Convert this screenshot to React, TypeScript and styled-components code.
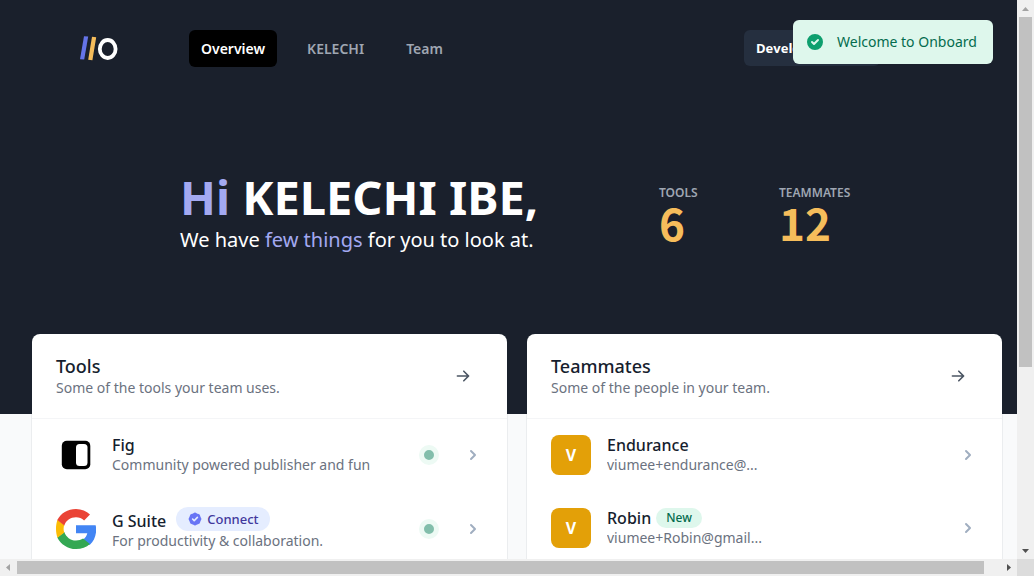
import React from 'react';
import styled, { createGlobalStyle } from 'styled-components';

const GlobalStyle = createGlobalStyle`
  *, *::before, *::after { box-sizing: border-box; }
  body {
    margin: 0;
    background: #f9fafb;
    color: #161e2e;
    font-family: "Noto Sans", "Open Sans", sans-serif;
    font-size: 14px;
    line-height: 20px;
  }
  h1, h2, h3, p, ul, dl, dd { margin: 0; padding: 0; }
  button { font: inherit; border: 0; cursor: pointer; }
  a { color: inherit; text-decoration: none; }
  svg { display: block; flex: none; }
`;

const Window = styled.div`
  display: grid;
  grid-template: minmax(0, 1fr) 17px / minmax(0, 1fr) 17px;
  height: 100vh;
`;

const Viewport = styled.div`
  position: relative;
  overflow: hidden;
`;

const Hero = styled.header`
  min-height: 414px;
  background: #1a202c;
  color: #fff;
`;

const Nav = styled.nav`
  display: flex;
  align-items: flex-start;
  padding: 30px 137px 0 80px;
`;

const LogoLink = styled.a`
  margin-right: 71px;
  padding-top: 6px;
`;

const NavLinks = styled.div`
  display: flex;
  flex: 1;
  gap: 18px;
`;

const NavLink = styled.a<{ $active?: boolean }>`
  padding: 8px 12px;
  border-radius: 6px;
  line-height: 21px;
  font-weight: 600;
  color: ${p => (p.$active ? '#fff' : '#9fa6b2')};
  background: ${p => (p.$active ? '#000' : 'transparent')};
`;

const ModeButton = styled.button`
  width: 136px;
  padding: 8px 12px;
  border-radius: 6px;
  background: #252f3f;
  color: #fff;
  font-family: "Open Sans", "Noto Sans", sans-serif;
  font-weight: 700;
  font-size: 13px;
  line-height: 20px;
  text-align: left;
`;

const Intro = styled.div`
  display: flex;
  padding: 105px 100px 0 180px;
`;

const Greeting = styled.div`
  flex: 0 0 479px;
  white-space: nowrap;
`;

const Title = styled.h1`
  font-size: 47px;
  line-height: 50px;
  font-weight: 700;
`;

const Lead = styled.p`
  margin-top: 6px;
  font-size: 20px;
  line-height: 24px;
`;

const Accent = styled.span`
  color: #a3a9f1;
`;

const Stats = styled.dl`
  display: flex;
`;

const Stat = styled.div`
  min-width: 120px;
  padding-top: 11px;
`;

const StatLabel = styled.dt`
  font-size: 12px;
  font-weight: 600;
  line-height: 20px;
  color: #9fa6b2;
`;

const StatValue = styled.dd`
  font-family: "Noto Sans CJK JP", "Noto Sans", sans-serif;
  font-size: 44px;
  font-weight: 700;
  line-height: 38px;
  color: #f6bd5b;
`;

const Cards = styled.main`
  display: grid;
  grid-template-columns: 1fr 1fr;
  gap: 20px;
  margin-top: -80px;
  padding: 0 15px 32px 32px;
`;

const Card = styled.section`
  border-radius: 8px;
  background: #fff;
  box-shadow: 0 0 0 1px rgba(22, 30, 46, 0.06);
`;

const CardHeader = styled.div`
  display: flex;
  align-items: center;
  justify-content: space-between;
  height: 85px;
  padding: 0 36px 0 24px;
  border-bottom: 1px solid #f4f5f7;
  color: #4b5563;
`;

const CardTitle = styled.h2`
  font-size: 18px;
  font-weight: 500;
  line-height: 24px;
  color: #161e2e;
`;

const Muted = styled.p`
  font-size: 14px;
  line-height: 20px;
  color: #6b7280;
  overflow: hidden;
  text-overflow: ellipsis;
  white-space: nowrap;
`;

const List = styled.ul`
  display: flex;
  flex-direction: column;
  gap: 1px;
  list-style: none;
`;

const Row = styled.a`
  display: flex;
  align-items: center;
  min-height: 72px;
  padding: 15px 24px;
  color: #a0aec0;
`;

const RowText = styled.div`
  flex: 1;
  min-width: 0;
  margin-left: 16px;
`;

const RowTitle = styled.div`
  display: flex;
  align-items: flex-end;
`;

const Name = styled.h3`
  font-size: 16px;
  font-weight: 500;
  line-height: 20px;
  color: #161e2e;
`;

const Mail = styled(Muted)`
  max-width: 168px;
`;

const ConnectPill = styled.span`
  display: flex;
  align-items: center;
  gap: 4px;
  height: 24px;
  margin-left: 10px;
  padding: 0 11px;
  border-radius: 12px;
  background: #e5edff;
  color: #42389d;
  font-size: 13px;
  font-weight: 500;
`;

const NewPill = styled.span`
  margin-left: 5px;
  padding: 0 10px;
  border-radius: 10px;
  background: #def7ec;
  color: #046c4e;
  font-size: 12px;
  font-weight: 500;
`;

const StatusDot = styled.span`
  width: 20px;
  height: 20px;
  margin-right: 24px;
  border: 5px solid #edfaf4;
  border-radius: 50%;
  background: #82beab;
`;

const ChevronBox = styled.span`
  width: 20px;
`;

const Avatar = styled.span`
  display: flex;
  align-items: center;
  justify-content: center;
  width: 40px;
  height: 40px;
  border-radius: 8px;
  background: #e3a008;
  color: #fff;
  font-size: 16px;
  font-weight: 700;
`;

const Toast = styled.div`
  position: absolute;
  top: 20px;
  right: 24px;
  display: flex;
  align-items: center;
  gap: 12px;
  min-width: 200px;
  height: 44px;
  padding: 0 12px;
  border-radius: 6px;
  background: #def7ec;
  color: #046c4e;
  white-space: nowrap;
`;

const Track = styled.div<{ $vertical?: boolean }>`
  display: flex;
  flex-direction: ${p => (p.$vertical ? 'column' : 'row')};
  align-items: center;
  background: #f0f0f0;
`;

const Thumb = styled.div<{ $vertical?: boolean }>`
  flex: 0 0 ${p => (p.$vertical ? '350px' : 'calc(100% - 50px)')};
  ${p => (p.$vertical ? 'width' : 'height')}: 13px;
  background: #c1c1c1;
`;

const Spacer = styled.div`
  flex: 1;
`;

const Corner = styled.div`
  background: #dcdcdc;
`;

const Logo = () => (
  <svg width="38" height="25" viewBox="0 0 38 25" role="img" aria-label="Onboard">
    <path d="M4 .2L8.200.6 4.200 23.600 0 23.200z" fill="#6574e8" />
    <path d="M12 .8L16.200 1.200 12.400 24.200 8.200 23.800z" fill="#f6bd5b" />
    <ellipse cx="27.700" cy="13" rx="7.900" ry="9" fill="none" stroke="#fff" strokeWidth="3.800" />
  </svg>
);

const Solid = ({ d, size = 20, color = 'currentColor' }: { d: string; size?: number; color?: string }) => (
  <svg width={size} height={size} viewBox="0 0 20 20" fill={color} aria-hidden="true">
    <path fillRule="evenodd" clipRule="evenodd" d={d} />
  </svg>
);

const ICON = {
  check: 'M10 18a8 8 0 100-16 8 8 0 000 16zm3.707-9.293a1 1 0 00-1.414-1.414L9 10.586 7.707 9.293a1 1 0 00-1.414 1.414l2 2a1 1 0 001.414 0l4-4z',
  badge: 'M6.267 3.455a3.066 3.066 0 001.745-.723 3.066 3.066 0 013.976 0 3.066 3.066 0 001.745.723 3.066 3.066 0 012.812 2.812c.051.643.304 1.254.723 1.745a3.066 3.066 0 010 3.976 3.066 3.066 0 00-.723 1.745 3.066 3.066 0 01-2.812 2.812 3.066 3.066 0 00-1.745.723 3.066 3.066 0 01-3.976 0 3.066 3.066 0 00-1.745-.723 3.066 3.066 0 01-2.812-2.812 3.066 3.066 0 00-.723-1.745 3.066 3.066 0 010-3.976 3.066 3.066 0 00.723-1.745 3.066 3.066 0 012.812-2.812zm7.440 5.252a1 1 0 00-1.414-1.414L9 10.586 7.707 9.293a1 1 0 00-1.414 1.414l2 2a1 1 0 001.414 0l4-4z',
  chevron: 'M7.293 14.707a1 1 0 010-1.414L10.586 10 7.293 6.707a1 1 0 011.414-1.414l4 4a1 1 0 010 1.414l-4 4a1 1 0 01-1.414 0z',
  arrow: 'M10.293 3.293a1 1 0 011.414 0l6 6a1 1 0 010 1.414l-6 6a1 1 0 01-1.414-1.414L14.586 11H3a1 1 0 110-2h11.586l-4.293-4.293a1 1 0 010-1.414z',
};

const FigLogo = () => (
  <svg width="40" height="40" viewBox="0 0 40 40" aria-hidden="true">
    <rect x="5.800" y="5.800" width="28.500" height="28.500" rx="5" fill="#000" />
    <rect x="20" y="9" width="11.500" height="22" rx="3.500" fill="#fff" />
  </svg>
);

const GoogleLogo = () => (
  <svg width="40" height="40" viewBox="4 4 40 40" aria-hidden="true">
    <path fill="#4285f4" d="M43.600 20.300H24v7.900h11.300c-.5 2.600-2 4.800-4.200 6.300v5.200h6.800c4-3.700 6.300-9.100 6.300-15.500 0-1.400-.2-2.700-.6-3.900z" />
    <path fill="#34a853" d="M24 44c5.700 0 10.400-1.900 13.900-5.100l-6.800-5.300c-1.900 1.300-4.300 2-7.100 2-5.500 0-10.100-3.700-11.700-8.600l-7 5.400C8.700 39.200 15.800 44 24 44z" />
    <path fill="#fbbc05" d="M12.300 27.600c-.5-1.200-.7-2.400-.7-3.700s.2-2.600.7-3.800L5.400 14.800C4.500 17.600 4 20.700 4 24s.5 6 1.500 8.800z" />
    <path fill="#ea4335" d="M24 12.300c3.100 0 5.900 1.100 8.100 3.100l5.900-5.900C34.400 6.100 29.700 4 24 4 15.800 4 8.700 8.300 5.300 15.100l7 5.300c1.600-4.700 6.200-8.100 11.700-8.100z" />
  </svg>
);

const SmallArrow = ({ direction }: { direction: 'up' | 'down' | 'left' | 'right' }) => {
  const d = {
    up: 'M5 11l3.500-4 3.500 4z',
    down: 'M5 7h7l-3.500 4z',
    left: 'M10 5v7L6 8.500z',
    right: 'M7 5v7l4-3.500z',
  }[direction];
  const muted = direction === 'up' || direction === 'left';
  return (
    <svg width="17" height="17" viewBox="0 0 17 17" aria-hidden="true">
      <path d={d} fill={muted ? '#a3a3a3' : '#505050'} />
    </svg>
  );
};

const tools = [
  { name: 'Fig', text: 'Community powered publisher and fun', logo: <FigLogo />, connect: false },
  { name: 'G Suite', text: 'For productivity & collaboration.', logo: <GoogleLogo />, connect: true },
];

const teammates = [
  { name: 'Endurance', mail: 'viumee+endurance@...', isNew: false },
  { name: 'Robin', mail: 'viumee+Robin@gmail...', isNew: true },
];

export default function App() {
  return (
    <Window>
      <GlobalStyle />
      <Viewport>
        <Hero>
          <Nav>
            <LogoLink href="#"><Logo /></LogoLink>
            <NavLinks>
              <NavLink href="#" $active>Overview</NavLink>
              <NavLink href="#">KELECHI</NavLink>
              <NavLink href="#">Team</NavLink>
            </NavLinks>
            <ModeButton type="button">Developer</ModeButton>
          </Nav>
          <Intro>
            <Greeting>
              <Title><Accent>Hi</Accent> KELECHI IBE,</Title>
              <Lead>We have <Accent>few things</Accent> for you to look at.</Lead>
            </Greeting>
            <Stats>
              <Stat><StatLabel>TOOLS</StatLabel><StatValue>6</StatValue></Stat>
              <Stat><StatLabel>TEAMMATES</StatLabel><StatValue>12</StatValue></Stat>
            </Stats>
          </Intro>
        </Hero>
        <Cards>
          <Card>
            <CardHeader>
              <div>
                <CardTitle>Tools</CardTitle>
                <Muted>Some of the tools your team uses.</Muted>
              </div>
              <a href="#" aria-label="All tools"><Solid d={ICON.arrow} size={16} /></a>
            </CardHeader>
            <List>
              {tools.map(t => (
                <li key={t.name}>
                  <Row href="#">
                    {t.logo}
                    <RowText>
                      <RowTitle>
                        <Name>{t.name}</Name>
                        {t.connect && <ConnectPill><Solid d={ICON.badge} size={16} color="#6875f5" />Connect</ConnectPill>}
                      </RowTitle>
                      <Muted>{t.text}</Muted>
                    </RowText>
                    <StatusDot />
                    <ChevronBox><Solid d={ICON.chevron} /></ChevronBox>
                  </Row>
                </li>
              ))}
            </List>
          </Card>
          <Card>
            <CardHeader>
              <div>
                <CardTitle>Teammates</CardTitle>
                <Muted>Some of the people in your team.</Muted>
              </div>
              <a href="#" aria-label="All teammates"><Solid d={ICON.arrow} size={16} /></a>
            </CardHeader>
            <List>
              {teammates.map(m => (
                <li key={m.name}>
                  <Row href="#">
                    <Avatar>V</Avatar>
                    <RowText>
                      <RowTitle>
                        <Name>{m.name}</Name>
                        {m.isNew && <NewPill>New</NewPill>}
                      </RowTitle>
                      <Mail>{m.mail}</Mail>
                    </RowText>
                    <ChevronBox><Solid d={ICON.chevron} /></ChevronBox>
                  </Row>
                </li>
              ))}
            </List>
          </Card>
        </Cards>
        <Toast role="status"><Solid d={ICON.check} color="#0e9f6e" />Welcome to Onboard</Toast>
      </Viewport>
      <Track $vertical>
        <SmallArrow direction="up" />
        <Thumb $vertical />
        <Spacer />
        <SmallArrow direction="down" />
      </Track>
      <Track>
        <SmallArrow direction="left" />
        <Thumb />
        <Spacer />
        <SmallArrow direction="right" />
      </Track>
      <Corner />
    </Window>
  );
}
